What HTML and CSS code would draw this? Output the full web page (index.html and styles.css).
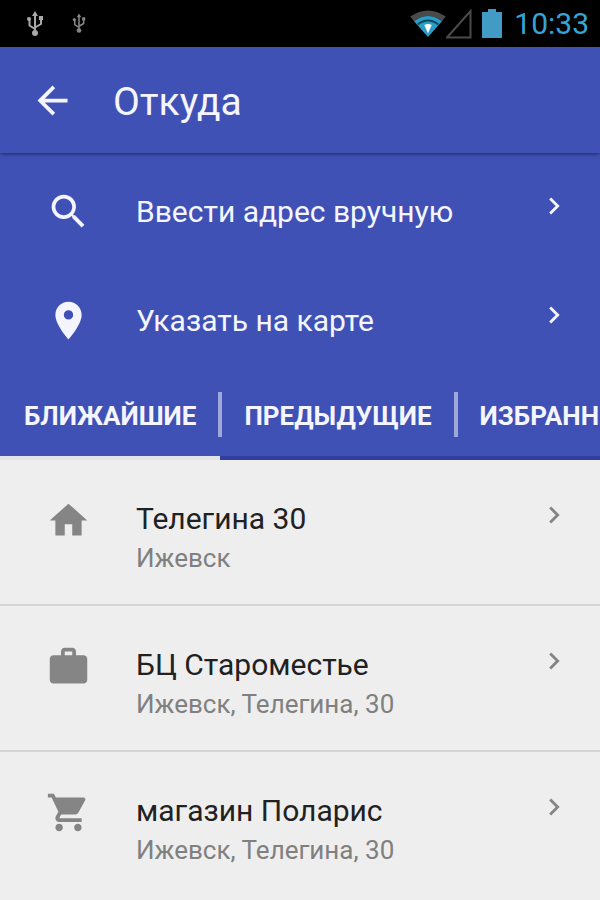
FILE: index.html
```html
<!DOCTYPE html>
<html lang="ru">

<head>
  <meta charset="UTF-8">
  <title>Откуда</title>
  <meta name="viewport" content="width=device-width, initial-scale=1.0">
  <link rel="stylesheet" href="styles.css">
</head>

<body>

  <div class="status-bar">
    <svg class="usb" width="18" height="26" viewBox="0 0 18 26" aria-hidden="true">
      <path d="M9 3v19M9 18L3.500 14.500V8M9 16.500l6-3.500V7" fill="none" stroke="currentColor" stroke-width="2"/>
      <circle cx="9" cy="22" r="3"/>
      <path d="M9 0l3 5H6z"/>
      <circle cx="3" cy="8" r="2"/>
      <path d="M13 5h4v4h-4z"/>
    </svg>
    <svg class="usb usb-small" width="14" height="21" viewBox="0 0 18 26" aria-hidden="true">
      <path d="M9 3v19M9 18L3.500 14.500V8M9 16.500l6-3.500V7" fill="none" stroke="currentColor" stroke-width="2"/>
      <circle cx="9" cy="22" r="3"/>
      <path d="M9 0l3 5H6z"/>
      <circle cx="3" cy="8" r="2"/>
      <path d="M13 5h4v4h-4z"/>
    </svg>
    <div class="status-right">
      <svg width="36" height="28" viewBox="0 0 38 30" aria-hidden="true">
        <path d="M0 7Q19-6 38 7l-4 5Q19 1 4 12z" fill="#4a4a4a"/>
        <path d="M4 12Q19 1 34 12L19 29z" fill="#2b9cc6"/>
        <path d="M8 15.500Q19 7 30 15.500" fill="none" stroke="#10475c" stroke-width="2"/>
        <path d="M13 16q6-4 12 0l-6 10z" fill="#2b9cc6"/>
        <path d="M15 16q4-2 8 0l-4 9z" fill="#fff"/>
      </svg>
      <svg width="26" height="30" viewBox="0 0 26 30" aria-hidden="true">
        <path d="M1 28.500L24.500 2v26.500z" fill="none" stroke="#4a4a4a" stroke-width="2"/>
      </svg>
      <svg class="battery" width="20" height="30" viewBox="0 0 20 30" aria-hidden="true">
        <path d="M0 3h6V0h8v3h6v26H0z" fill="#419bc4"/>
      </svg>
      <span class="time">10:33</span>
    </div>
  </div>

  <header class="toolbar">
    <button type="button" class="back-button" aria-label="Назад">
      <svg class="icon" viewBox="0 0 24 24"><path d="M20 11H7.830l5.590-5.590L12 4l-8 8 8 8 1.410-1.410L7.830 13H20v-2z"/></svg>
    </button>
    <h1>Откуда</h1>
  </header>

  <div class="actions">
    <a class="action" href="#manual">
      <svg class="icon" viewBox="0 0 24 24"><path d="M15.500 14h-.790l-.280-.270A6.471 6.471 0 0 0 16 9.500 6.500 6.500 0 1 0 9.500 16c1.610 0 3.090-.590 4.230-1.570l.270.280v.790l5 4.990L20.490 19l-4.990-5zm-6 0C7.010 14 5 11.990 5 9.500S7.010 5 9.500 5 14 7.010 14 9.500 11.990 14 9.500 14z"/></svg>
      <span class="action-text">Ввести адрес вручную</span>
      <svg class="chevron" viewBox="0 0 24 24"><path d="M10 6L8.590 7.410 13.170 12l-4.580 4.590L10 18l6-6z"/></svg>
    </a>
    <a class="action" href="#map">
      <svg class="icon" viewBox="0 0 24 24"><path d="M12 2C8.130 2 5 5.130 5 9c0 5.250 7 13 7 13s7-7.750 7-13c0-3.870-3.130-7-7-7zm0 9.500a2.500 2.500 0 0 1 0-5 2.500 2.500 0 0 1 0 5z"/></svg>
      <span class="action-text">Указать на карте</span>
      <svg class="chevron" viewBox="0 0 24 24"><path d="M10 6L8.590 7.410 13.170 12l-4.580 4.590L10 18l6-6z"/></svg>
    </a>
  </div>

  <nav class="tabs">
    <button type="button" class="tab active">БЛИЖАЙШИЕ</button>
    <button type="button" class="tab">ПРЕДЫДУЩИЕ</button>
    <button type="button" class="tab">ИЗБРАННЫЕ</button>
  </nav>

  <main class="places">
    <a class="place" href="#home">
      <svg class="icon" viewBox="0 0 24 24"><path d="M10 20v-6h4v6h5v-8h3L12 3 2 12h3v8z"/></svg>
      <div class="place-text">
        <div class="place-name">Телегина 30</div>
        <div class="place-address">Ижевск</div>
      </div>
      <svg class="chevron" viewBox="0 0 24 24"><path d="M10 6L8.590 7.410 13.170 12l-4.580 4.590L10 18l6-6z"/></svg>
    </a>
    <a class="place" href="#work">
      <svg class="icon" viewBox="0 0 24 24"><path d="M20 6h-4V4c0-1.110-.890-2-2-2h-4c-1.110 0-2 .890-2 2v2H4c-1.110 0-1.990.890-1.990 2L2 19c0 1.110.890 2 2 2h16c1.110 0 2-.890 2-2V8c0-1.110-.890-2-2-2zm-6 0h-4V4h4v2z"/></svg>
      <div class="place-text">
        <div class="place-name">БЦ Староместье</div>
        <div class="place-address">Ижевск, Телегина, 30</div>
      </div>
      <svg class="chevron" viewBox="0 0 24 24"><path d="M10 6L8.590 7.410 13.170 12l-4.580 4.590L10 18l6-6z"/></svg>
    </a>
    <a class="place" href="#shop">
      <svg class="icon" viewBox="0 0 24 24"><path d="M7 18c-1.100 0-1.990.900-1.990 2S5.900 22 7 22s2-.900 2-2-.900-2-2-2zM1 2v2h2l3.600 7.590-1.350 2.450c-.160.280-.250.610-.250.960 0 1.100.900 2 2 2h12v-2H7.420c-.140 0-.250-.110-.250-.250l.030-.120.900-1.630h7.450c.750 0 1.410-.410 1.750-1.030l3.580-6.490A1.003 1.003 0 0 0 20 4H5.210l-.940-2H1zm16 16c-1.100 0-1.990.900-1.990 2s.890 2 1.990 2 2-.900 2-2-.900-2-2-2z"/></svg>
      <div class="place-text">
        <div class="place-name">магазин Поларис</div>
        <div class="place-address">Ижевск, Телегина, 30</div>
      </div>
      <svg class="chevron" viewBox="0 0 24 24"><path d="M10 6L8.590 7.410 13.170 12l-4.580 4.590L10 18l6-6z"/></svg>
    </a>
  </main>

</body>

</html>
```
FILE: styles.css
```css
* {
  box-sizing: border-box;
}

body {
  margin: 0;
  font-family: Roboto, "Noto Sans", sans-serif;
  background: #eeeeee;
  overflow-x: hidden;
}

a {
  color: inherit;
  text-decoration: none;
}

button {
  border: none;
  background: none;
  padding: 0;
  font-family: inherit;
  color: inherit;
  cursor: pointer;
}

svg {
  display: block;
  flex: none;
}

.icon {
  width: 45px;
  height: 45px;
  fill: currentColor;
}

.chevron {
  width: 34px;
  height: 34px;
  fill: currentColor;
}

/* status bar */
.status-bar {
  display: flex;
  align-items: center;
  height: 47px;
  padding: 0 11px 0 26px;
  background: #000;
}

.usb {
  color: #a8a8a8;
  fill: currentColor;
}

.usb-small {
  margin-left: 28px;
  color: #858585;
}

.status-right {
  display: flex;
  align-items: center;
  margin-left: auto;
}

.battery {
  margin-left: 10px;
}

.time {
  margin-left: 12px;
  font-size: 30px;
  line-height: 47px;
  color: #35a5d6;
}

/* toolbar */
.toolbar {
  position: relative;
  display: flex;
  align-items: center;
  gap: 38px;
  height: 106px;
  padding: 0 30px;
  background: #3f51b5;
  color: #f5f5ff;
  box-shadow: 0 1px 4px rgba(0, 0, 0, 0.5);
}

.toolbar h1 {
  margin: 0;
  padding-top: 4px;
  font-size: 39px;
  font-weight: 400;
}

/* manual / map */
.actions {
  padding: 4px 0 0;
  background: #3f51b5;
  color: #f5f5ff;
}

.action {
  display: flex;
  height: 109px;
  padding: 32px 29px 0 46px;
}

.action-text {
  flex: 1;
  margin-left: 45px;
  font-size: 30px;
  line-height: 45px;
}

/* tabs */
.tabs {
  display: flex;
  height: 85px;
  background: #3f51b5;
  overflow: hidden;
}

.tab {
  position: relative;
  flex: none;
  padding: 0 24px;
  border-bottom: 4px solid #303f9f;
  font-size: 26px;
  font-weight: 700;
  color: #f5f5ff;
}

.tab.active {
  border-bottom-color: #e4e4e8;
}

.tab:not(:last-child)::after {
  content: "";
  position: absolute;
  z-index: 1;
  right: -2px;
  bottom: 19px;
  width: 4px;
  height: 45px;
  background: #9fa8da;
}

/* places */
.place {
  display: flex;
  height: 146px;
  padding: 38px 29px 0 46px;
  color: #858585;
}

.place:not(:last-child) {
  border-bottom: 2px solid #d4d4d4;
}

.place-text {
  flex: 1;
  margin-left: 45px;
}

.place-name {
  font-size: 30px;
  line-height: 42px;
  color: #212121;
}

.place-address {
  font-size: 26px;
  line-height: 36px;
  color: #808080;
}
```
